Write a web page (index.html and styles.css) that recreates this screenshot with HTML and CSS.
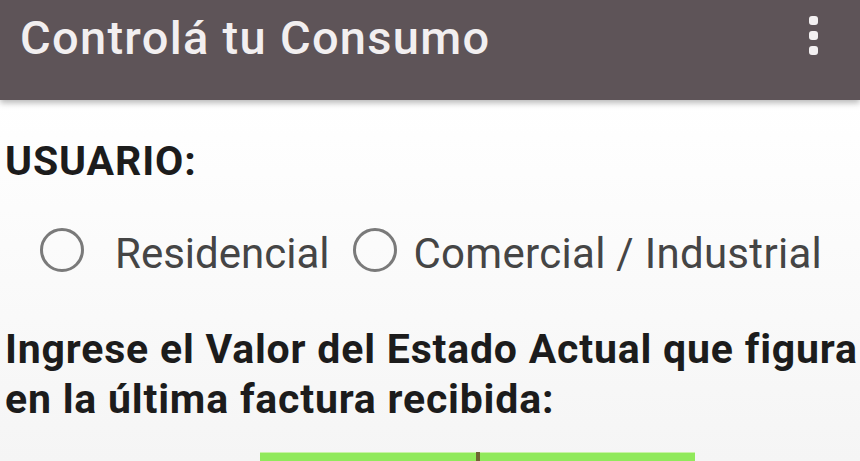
FILE: index.html
```html
<!DOCTYPE html>
<html lang="es">
<head>
<meta charset="utf-8">
<title>Controlá tu Consumo</title>
<link rel="stylesheet" href="styles.css">
</head>
<body>
<div class="screen">
  <header class="appbar">
    <h1 class="title">Controlá tu Consumo</h1>
    <div class="kebab" aria-label="Más opciones">
      <span class="dot"></span><span class="dot"></span><span class="dot"></span>
    </div>
  </header>
  <main class="content">
    <div class="label">USUARIO:</div>
    <div class="radios">
      <label class="option opt-res"><span class="circle"></span><span class="opt-text">Residencial</span></label>
      <label class="option opt-com"><span class="circle"></span><span class="opt-text">Comercial / Industrial</span></label>
    </div>
    <p class="prompt">Ingrese el Valor del Estado Actual que figura<br>en la última factura recibida:</p>
    <div class="buttons">
      <div class="btn"></div>
      <div class="sep"></div>
      <div class="btn"></div>
    </div>
  </main>
</div>
</body>
</html>
```
FILE: styles.css
```css
html, body {
  margin: 0;
  padding: 0;
  height: 100%;
  overflow: hidden;
}
body {
  background: #f7f7f7;
  font-family: Roboto, "Liberation Sans", sans-serif;
}
.screen {
  display: flex;
  flex-direction: column;
  height: 461px;
  overflow: hidden;
}
.appbar {
  flex: none;
  height: 100px;
  box-sizing: border-box;
  background: #5e5458;
  display: flex;
  justify-content: space-between;
  align-items: flex-start;
  padding: 13px 42px 0 20px;
  box-shadow: 0 3px 6px rgba(0, 0, 0, 0.28);
  position: relative;
  z-index: 1;
}
.title {
  margin: 0;
  font-size: 47px;
  font-weight: 500;
  line-height: 50px;
  color: #f2eff0;
  letter-spacing: 1.3px;
}
.kebab {
  margin-top: 3px;
  display: flex;
  flex-direction: column;
  gap: 6px;
}
.dot {
  width: 9px;
  height: 9px;
  border-radius: 3px;
  background: #f3f0f1;
}
.content {
  flex: none;
  padding-left: 5px;
  background: linear-gradient(#ffffff, #f5f5f5);
  height: 361px;
}
.label {
  margin-top: 36px;
  font-size: 41px;
  font-weight: 700;
  line-height: 50px;
  color: #1c1c1c;
  letter-spacing: 0.9px;
}
.radios {
  margin-top: 43px;
  display: flex;
  align-items: center;
  height: 50px;
}
.option {
  display: flex;
  align-items: center;
}
.opt-res {
  margin-left: 35px;
}
.opt-com {
  margin-left: 24px;
}
.circle {
  width: 38px;
  height: 38px;
  border: 3px solid #7a7a7a;
  border-radius: 50%;
  margin-bottom: 8px;
  flex: none;
}
.opt-res .circle {
  margin-right: 31px;
}
.opt-com .circle {
  margin-right: 16px;
}
.opt-text {
  font-size: 42px;
  line-height: 50px;
  color: #454545;
  white-space: nowrap;
}
.opt-com .opt-text {
  letter-spacing: 0.3px;
}
.prompt {
  margin: 45px 0 0;
  font-size: 41px;
  font-weight: 700;
  line-height: 50px;
  color: #1c1c1c;
  white-space: nowrap;
  letter-spacing: 0.8px;
}
.buttons {
  margin: 28px 0 0 255px;
  width: 435px;
  height: 20px;
  display: flex;
}
.btn {
  flex: 1;
  background: #90e95b;
  border-top: 1px solid #c9f2a6;
}
.sep {
  width: 4px;
  background: #6f6432;
}
```
